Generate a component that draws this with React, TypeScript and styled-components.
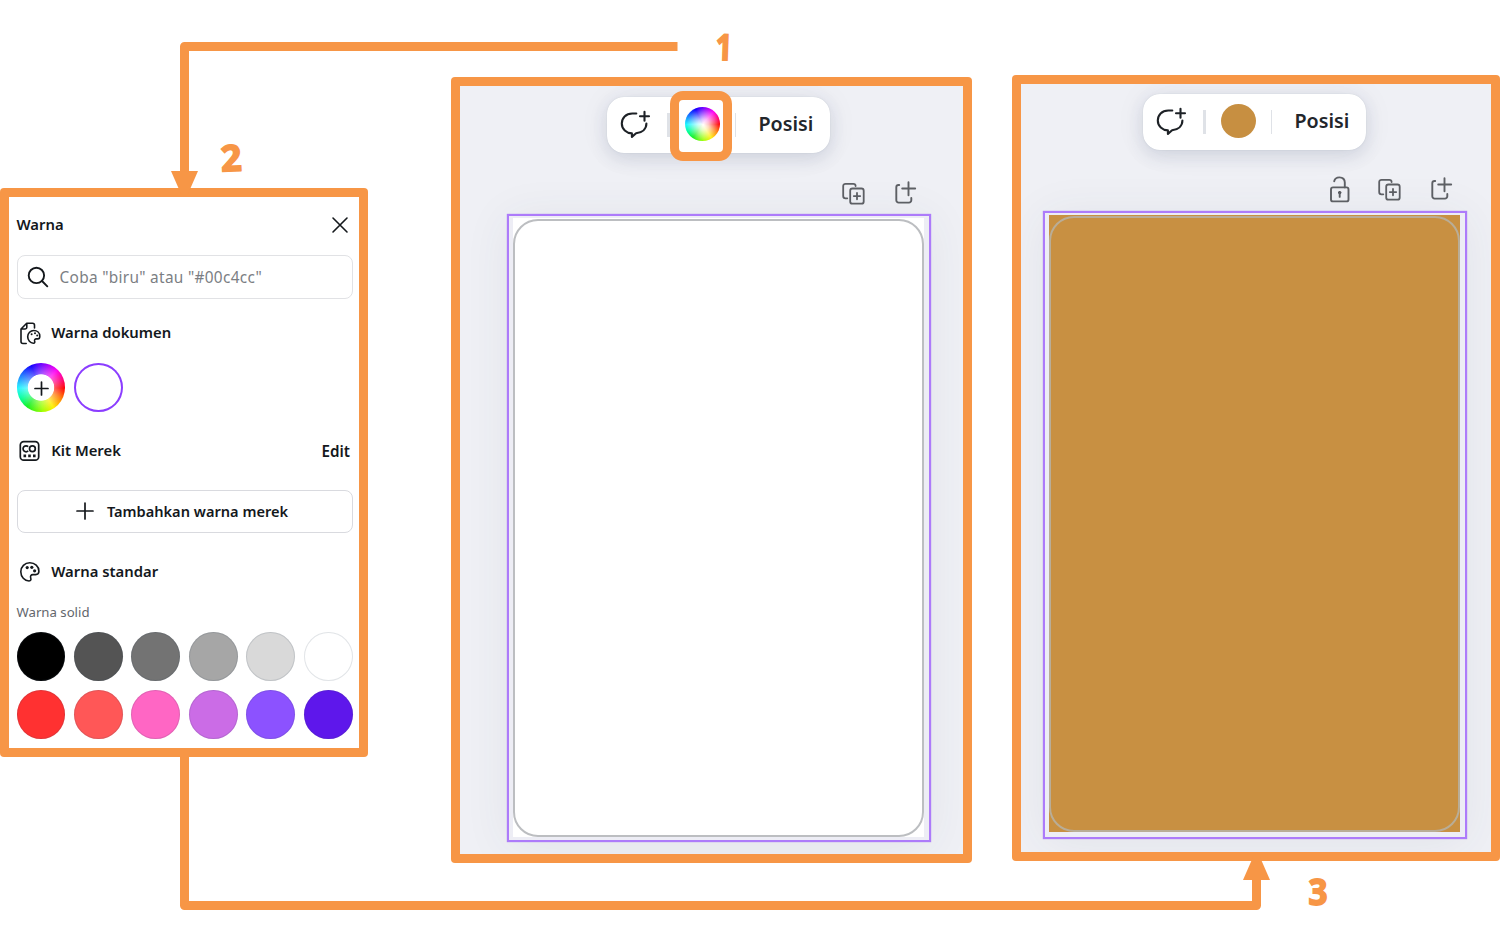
import React from "react";
import styled, { createGlobalStyle } from "styled-components";

const ORANGE = "#f79646";
const INK = "#14181c";
const SANS = `"Noto Sans", "Open Sans", sans-serif`;

const GlobalStyle = createGlobalStyle`
  *, *::before, *::after { box-sizing: border-box; }
  body { margin: 0; background: #fff; font-family: ${SANS}; overflow: hidden; }
  svg { display: block; flex: none; }
`;

const Board = styled.main`
  position: relative;
  display: flex;
  align-items: flex-start;
  width: 1500px;
  height: 950px;
  overflow: hidden;
  background: #fff;
`;

const Frame = styled.section<{ $w: number; $h: number; $top: number; $left?: number }>`
  flex: none;
  width: ${(p) => p.$w}px;
  height: ${(p) => p.$h}px;
  margin-top: ${(p) => p.$top}px;
  margin-left: ${(p) => p.$left ?? 0}px;
  background: ${ORANGE};
  border-radius: 4px;
  padding: 9px;
`;

const ColorPanel = styled.div`
  display: flex;
  flex-direction: column;
  height: 100%;
  background: #fff;
  padding: 0 6.5px 0 7.5px;
`;

const PanelHeader = styled.header`
  display: flex;
  align-items: center;
  justify-content: space-between;
  height: 56px;
  padding-right: 4px;
`;

const Heading = styled.h2`
  margin: -2px 0 0;
  font-size: 14.85px;
  line-height: 20px;
  font-weight: 600;
  white-space: nowrap;
  color: ${INK};
`;

const SearchBox = styled.div`
  display: flex;
  align-items: center;
  gap: 10.5px;
  height: 44px;
  margin-top: 2px;
  padding-left: 9.5px;
  border: 1.5px solid #e1e2e5;
  border-radius: 8px;
  font-size: 15.4px;
  letter-spacing: 0.3px;
  white-space: nowrap;
  color: #7b7e83;
`;

const SectionRow = styled.div<{ $mt: number }>`
  display: flex;
  align-items: center;
  height: 44px;
  margin-top: ${(p) => p.$mt}px;
  padding: 0 2.5px 0 1px;
  gap: 9.7px;
`;

const EditLink = styled.span`
  margin-left: auto;
  font-size: 15.2px;
  font-weight: 600;
  color: ${INK};
`;

const SwatchRow = styled.div<{ $mt: number }>`
  display: grid;
  grid-template-columns: repeat(6, 48.6px);
  gap: 8.9px;
  margin-top: ${(p) => p.$mt}px;
`;

const Swatch = styled.span<{ $color: string; $ring?: string }>`
  height: 49px;
  border-radius: 50%;
  background: ${(p) => p.$color};
  box-shadow: inset 0 0 0 ${(p) => p.$ring ?? "1px rgba(57, 76, 96, 0.15)"};
`;

const HUES =
  "#6a00ff 0deg, #ff00f2 42deg, #ff0080 68deg, #ff0000 92deg, #ff7a00 118deg, #ffee00 148deg, #a0ff00 176deg, #14f01e 215deg, #00ff90 240deg, #20f6ff 268deg, #1a90ff 295deg, #1200ff 335deg, #6a00ff 360deg";

const AddColor = styled.span`
  display: flex;
  align-items: center;
  justify-content: center;
  height: 49px;
  padding: 1px 0 0 1.5px;
  border-radius: 50%;
  background: radial-gradient(circle, #fff 12.8px, rgba(255, 255, 255, 0.35) 13.6px, transparent 24px),
    conic-gradient(${HUES});
`;

const AddButton = styled.button`
  display: flex;
  align-items: center;
  justify-content: center;
  gap: 13px;
  height: 43px;
  margin-top: 17px;
  padding: 0 5px 1px 0;
  border: 1px solid #d9dadf;
  border-radius: 8px;
  background: #fff;
  font: 600 14.6px ${SANS};
  color: ${INK};
`;

const SmallLabel = styled.p`
  margin: 9px 0 0;
  height: 20px;
  line-height: 19px;
  font-size: 13.2px;
  color: #62666c;
`;

const Canvas = styled.div<{ $pt: number }>`
  display: flex;
  flex-direction: column;
  height: 100%;
  padding-top: ${(p) => p.$pt}px;
  background: #eff0f5;
  overflow: hidden;
`;

const Toolbar = styled.div<{ $left: number }>`
  flex: none;
  display: flex;
  align-items: center;
  width: 223px;
  height: 56px;
  margin-left: ${(p) => p.$left}px;
  padding-left: 12px;
  border-radius: 17px;
  background: #fff;
  box-shadow: 0 0 1px rgba(64, 87, 109, 0.25), 0 5px 18px rgba(44, 62, 100, 0.16), 0 0 40px rgba(64, 87, 109, 0.04);
`;

const Divider = styled.span<{ $w: number; $l: number; $r: number }>`
  width: ${(p) => p.$w}px;
  height: 24px;
  margin: 0 ${(p) => p.$r}px 0 ${(p) => p.$l}px;
  background: #dfe2e7;
`;

const ColorSlot = styled.span<{ $marked?: boolean }>`
  display: flex;
  align-items: center;
  justify-content: center;
  width: 62px;
  height: 70px;
  margin: 2px -13.5px 0;
  z-index: 1;
  border: 9px solid ${(p) => (p.$marked ? ORANGE : "transparent")};
  border-radius: 13px;
`;

const ColorDot = styled.span<{ $fill: string }>`
  width: 35px;
  height: 34px;
  flex: none;
  margin-top: -4px;
  margin-left: 3px;
  border-radius: 50%;
  background: ${(p) => p.$fill};
`;

const PositionLabel = styled.span`
  font-size: 19.7px;
  font-weight: 600;
  line-height: 24px;
  margin-bottom: 2px;
  color: #22262b;
`;

const PageActions = styled.div<{ $mt: number; $w: number }>`
  display: flex;
  justify-content: flex-end;
  gap: 27.5px;
  height: 28px;
  width: ${(p) => p.$w}px;
  margin-top: ${(p) => p.$mt}px;
`;

const Selection = styled.div<{ $left: number; $mt: number; $pad: string }>`
  flex: none;
  width: 424px;
  height: 628px;
  margin-left: ${(p) => p.$left}px;
  margin-top: ${(p) => p.$mt}px;
  padding: ${(p) => p.$pad};
  border: 2px solid #ad7bfa;
  background: #ededf5;
  box-shadow: 0 0 1px #a77bf0, 0 4px 44px rgba(60, 65, 85, 0.07);
`;

const Page = styled.div<{ $fill: string }>`
  width: 411px;
  height: 100%;
  padding: 1px 0 0;
  background: ${(p) => p.$fill};
`;

const Outline = styled.div<{ $color: string }>`
  height: 100%;
  border: 2px solid ${(p) => p.$color};
  border-radius: 25px;
`;

const Arrows = styled.svg`
  position: absolute;
  inset: 0;
  pointer-events: none;
`;

const StepNumber = styled.span<{ $x: number; $y: number; $tilt: number; $sx: number }>`
  position: absolute;
  left: ${(p) => p.$x}px;
  top: ${(p) => p.$y}px;
  width: 40px;
  text-align: center;
  font: normal 700 36px/40px "Noto Sans", sans-serif;
  color: ${ORANGE};
  -webkit-text-stroke: 1.8px ${ORANGE};
  transform: rotate(${(p) => p.$tilt}deg) scaleX(${(p) => p.$sx});
`;

const CloseIcon = () => (
  <svg width="18" height="18" viewBox="0 0 18 18" fill="none" stroke={INK} strokeWidth="1.6" strokeLinecap="round">
    <path d="M2 2 16 16M16 2 2 16" />
  </svg>
);

const SearchIcon = () => (
  <svg width="22" height="22" viewBox="0 0 22 22" fill="none" stroke={INK} strokeWidth="1.9" strokeLinecap="round">
    <circle cx="9.4" cy="9.4" r="7.7" />
    <path d="m15 15 5.3 5.3" />
  </svg>
);

const DocColorIcon = () => (
  <svg width="24" height="24" viewBox="0 0 24 24" fill="none" stroke={INK} strokeWidth="1.6" strokeLinecap="round" strokeLinejoin="round">
    <path d="M8.2 22.5H5a2 2 0 0 1-2-2V8l5.7-5.7H14.5a2 2 0 0 1 2 2V7M3.2 8H7a1.8 1.8 0 0 0 1.8-1.8V2.5" />
    <path d="M21.8 15.2c0-3.4-2.7-5.7-6-5.7s-6.1 2.7-6.1 6.3c0 3.5 2.6 6.4 5.6 6.4 1.7 0 1.6-1.4 1.3-2.3-.3-1.2.4-2 1.7-2h1.5c1.3 0 2-1.3 2-2.7Z" />
    <g fill={INK} stroke="none">
      <circle cx="13.6" cy="13.2" r="1" />
      <circle cx="17" cy="12.3" r="1" />
      <circle cx="19.2" cy="14.6" r="1" />
    </g>
  </svg>
);

const BrandKitIcon = () => (
  <svg width="24" height="24" viewBox="0 0 24 24" fill="none" stroke={INK} strokeWidth="1.7">
    <rect x="2.3" y="2.6" width="18.4" height="18.6" rx="3.5" />
    <path d="M10.2 7.7a3 3 0 1 0 0 4.2" />
    <circle cx="14.4" cy="9.8" r="2.9" />
    <path d="M5.5 16.9h2.6M10.2 16.9h2.6M15 16.9h2.6" strokeWidth="2.6" />
  </svg>
);

const PaletteIcon = () => (
  <svg width="24" height="24" viewBox="0 0 24 24" fill="none" stroke={INK} strokeWidth="1.6" strokeLinejoin="round">
    <path d="M20.9 11.3c0-5-4.1-8.5-9.1-8.5-5 0-9 4-9 9 0 5 3.8 9.2 8.2 9.2 2 0 2.2-1.6 1.7-3-.6-1.7.2-3.4 2.2-3.4h2.8c2.2 0 3.2-1.3 3.2-3.3Z" />
    <g fill={INK} stroke="none">
      <circle cx="9.2" cy="7.6" r="1.6" />
      <circle cx="13.8" cy="7.3" r="1.6" />
      <circle cx="16.6" cy="10.8" r="1.6" />
    </g>
  </svg>
);

const PlusIcon = ({ size, stroke }: { size: number; stroke: number }) => (
  <svg width={size} height={size} viewBox={`0 0 ${size} ${size}`} stroke={INK} strokeWidth={stroke} strokeLinecap="round">
    <path d={`M${size / 2} 1V${size - 1}M1 ${size / 2}H${size - 1}`} />
  </svg>
);

const CommentIcon = () => (
  <svg width="32" height="32" viewBox="0 0 32 32" fill="none" stroke="#1d2126" strokeWidth="2.1" strokeLinecap="round" strokeLinejoin="round">
    <path d="M17.3 4.5h-4C6.8 4.5 2.8 9 2.8 14.5c0 5.7 4.6 9.7 10.1 9.9v3.5l4.2-3.6c6.1-.7 10.3-4.4 10.3-9.8" />
    <path d="M25.5 2.7v9M21 7.2h9" />
  </svg>
);

const UnlockIcon = () => (
  <svg width="24" height="28" viewBox="-2 0 24 28" fill="none" stroke="#5e6065" strokeWidth="1.9" strokeLinecap="round" strokeLinejoin="round">
    <rect x="3" y="11.4" width="17.5" height="14" rx="2" />
    <path d="M6.2 5.2C6.8 2.6 8.7 1.4 11.4 1.4c3.2 0 5.4 2 5.4 5.2V11.4" />
    <circle cx="11.7" cy="16.6" r="1.7" fill="#45474c" stroke="none" />
    <path d="M11.7 16.6v4.3" />
  </svg>
);

const CopyPageIcon = () => (
  <svg width="25" height="28" viewBox="0 0 25 28" fill="none" stroke="#5e6065" strokeWidth="1.8" strokeLinecap="round" strokeLinejoin="round">
    <path d="M6.3 18.3H4.5a2.3 2.3 0 0 1-2.3-2.3V6.1a2.3 2.3 0 0 1 2.3-2.3h7.8a2.3 2.3 0 0 1 2.3 2.3" />
    <rect x="9.2" y="8.5" width="13.5" height="15.2" rx="2.3" />
    <path d="M16 12.9v6.4M12.8 16.1h6.4" />
  </svg>
);

const AddPageIcon = () => (
  <svg width="24" height="28" viewBox="0 0 24 28" fill="none" stroke="#5e6065" strokeWidth="1.9" strokeLinecap="round" strokeLinejoin="round">
    <path d="M5.2 5h-.6A2.3 2.3 0 0 0 2.3 7.3V20.3a2.3 2.3 0 0 0 2.3 2.3H15a2.3 2.3 0 0 0 2.3-2.3V18" />
    <path d="M14.5 2.2v13M8.2 8.5h13" />
  </svg>
);

const SOLID_COLORS = [
  ["#000000", "#545454", "#737373", "#a6a6a6", "#d9d9d9", "#ffffff"],
  ["#ff3131", "#ff5757", "#ff66c4", "#cb6ce6", "#8c52ff", "#5e17eb"],
];

const ContextBar = ({ left, fill, marked }: { left: number; fill: string; marked?: boolean }) => (
  <Toolbar $left={left}>
    <CommentIcon />
    <Divider $w={3} $l={15.5} $r={13.5} />
    <ColorSlot $marked={marked}>
      <ColorDot $fill={fill} />
    </ColorSlot>
    <Divider $w={1} $l={16.5} $r={23} />
    <PositionLabel>Posisi</PositionLabel>
  </Toolbar>
);

export default function App() {
  return (
    <>
      <GlobalStyle />
      <Board>
        <Frame $w={368} $h={569} $top={188}>
          <ColorPanel>
            <PanelHeader>
              <Heading>Warna</Heading>
              <CloseIcon />
            </PanelHeader>
            <SearchBox>
              <SearchIcon />
              <span>Coba "biru" atau "#00c4cc"</span>
            </SearchBox>
            <SectionRow $mt={12}>
              <DocColorIcon />
              <Heading>Warna dokumen</Heading>
            </SectionRow>
            <SwatchRow $mt={8}>
              <AddColor>
                <PlusIcon size={15} stroke={1.7} />
              </AddColor>
              <Swatch $color="#fff" $ring="2px #8b3dff" />
            </SwatchRow>
            <SectionRow $mt={17}>
              <BrandKitIcon />
              <Heading>Kit Merek</Heading>
              <EditLink>Edit</EditLink>
            </SectionRow>
            <AddButton>
              <PlusIcon size={18} stroke={1.7} />
              Tambahkan warna merek
            </AddButton>
            <SectionRow $mt={17}>
              <PaletteIcon />
              <Heading>Warna standar</Heading>
            </SectionRow>
            <SmallLabel>Warna solid</SmallLabel>
            {SOLID_COLORS.map((row, i) => (
              <SwatchRow key={i} $mt={9}>
                {row.map((c) => (
                  <Swatch key={c} $color={c} />
                ))}
              </SwatchRow>
            ))}
          </ColorPanel>
        </Frame>

        <Frame $w={521} $h={786} $top={77} $left={83}>
          <Canvas $pt={11}>
            <ContextBar
              left={147}
              marked
              fill={`radial-gradient(circle at 52% 52%, #fff 0%, rgba(255,255,255,0.75) 22%, rgba(255,255,255,0) 66%), conic-gradient(${HUES})`}
            />
            <PageActions $mt={27} $w={457.5}>
              <CopyPageIcon />
              <AddPageIcon />
            </PageActions>
            <Selection $left={47} $mt={6} $pad="2px 4px 3px 4px">
              <Page $fill="#fff">
                <Outline $color="#bcbec1" />
              </Page>
            </Selection>
          </Canvas>
        </Frame>

        <Frame $w={488} $h={786} $top={75} $left={40}>
          <Canvas $pt={9.5}>
            <ContextBar left={122} fill="#c78f41" />
            <PageActions $mt={26.5} $w={432.7}>
              <UnlockIcon />
              <CopyPageIcon />
              <AddPageIcon />
            </PageActions>
            <Selection $left={22} $mt={6.5} $pad="2px 4px 5px 4px">
              <Page $fill="#c89042">
                <Outline $color="#b9ad97" />
              </Page>
            </Selection>
          </Canvas>
        </Frame>

        <Arrows width="1500" height="950" viewBox="0 0 1500 950" fill="none" stroke={ORANGE} strokeWidth="9" strokeLinejoin="round">
          <path d="M677.5 46.5H184.5V180M184.5 755V905.5H1256.5V870" />
          <path d="M171 171h27l-10.5 24h-6ZM1243 880h27l-10.5-24h-6Z" fill={ORANGE} stroke="none" />
        </Arrows>
        <StepNumber $x={703.5} $y={27} $tilt={2} $sx={0.8}>1</StepNumber>
        <StepNumber $x={211} $y={138} $tilt={-3} $sx={1}>2</StepNumber>
        <StepNumber $x={1297.5} $y={871.5} $tilt={0} $sx={0.92}>3</StepNumber>
      </Board>
    </>
  );
}
